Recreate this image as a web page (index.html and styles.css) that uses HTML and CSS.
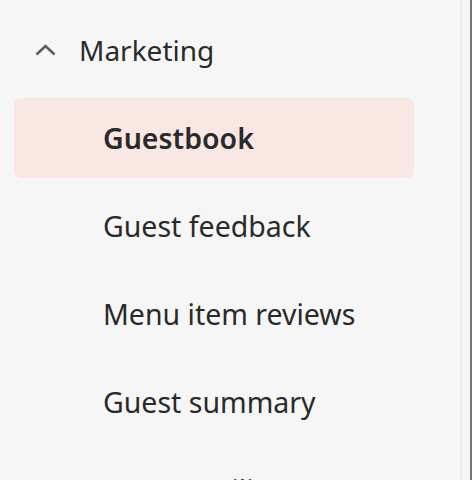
FILE: index.html
```html
<!DOCTYPE html>
<html>
<head>
<meta charset="utf-8">
<link rel="stylesheet" href="styles.css">
</head>
<body>
<div class="frame">
  <nav class="sidebar">
    <div class="group-head">
      <svg class="chev" width="21" height="12" viewBox="0 0 21 12"><path d="M1.5 10.5 L10.5 2 L19.5 10.5" fill="none" stroke="#5f5f5f" stroke-width="2.6"/></svg>
      <span class="group-title">Marketing</span>
    </div>
    <ul class="items">
      <li class="item active">Guestbook</li>
      <li class="item">Guest feedback</li>
      <li class="item">Menu item reviews</li>
      <li class="item">Guest summary</li>
      <li class="item">Guest mailing</li>
    </ul>
  </nav>
  <div class="scroll-edge"></div>
</div>
</body>
</html>
```
FILE: styles.css
```css
html, body {
  margin: 0;
  padding: 0;
  background: #f6f6f6;
  height: 100%;
  overflow: hidden;
}
.frame {
  display: flex;
  height: 480px;
  overflow: hidden;
}
.sidebar {
  width: 462px;
  border-right: 2px solid #ebebeb;
  padding: 14px 0 0 14px;
  box-sizing: border-box;
  font-family: "Noto Sans", sans-serif;
  color: #2a2a2a;
}
.scroll-edge {
  flex: 1;
  border-right: 2px solid #777;
}
.group-head {
  display: flex;
  align-items: center;
  height: 72px;
  padding-left: 21px;
}
.chev {
  margin-right: 23px;
}
.group-title {
  font-size: 28px;
}
.items {
  list-style: none;
  margin: 12px 0 0;
  padding: 0;
  display: flex;
  flex-direction: column;
  gap: 8px;
}
.item {
  width: 400px;
  height: 80px;
  flex-shrink: 0;
  box-sizing: border-box;
  padding-left: 89px;
  display: flex;
  align-items: center;
  font-size: 28.5px;
  border-radius: 7px;
}
.item.active {
  background: #f9e7e4;
  font-weight: 600;
}
```
